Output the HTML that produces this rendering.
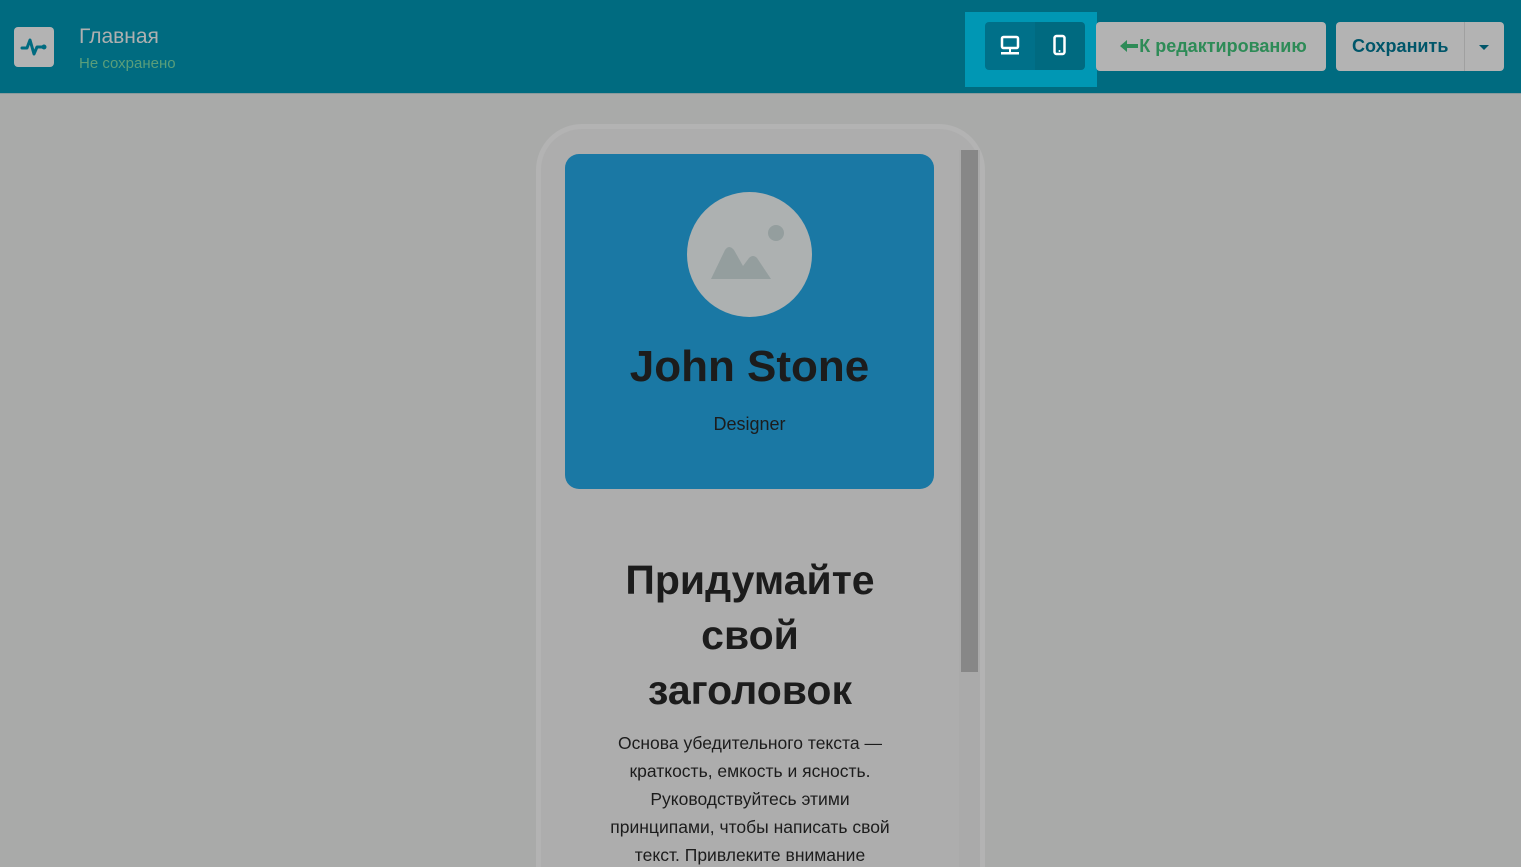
<!DOCTYPE html>
<html><head><meta charset="utf-8"><style>
*{margin:0;padding:0;box-sizing:border-box}
html,body{width:1521px;height:867px;overflow:hidden}
body{background:#a9aaa9;font-family:"Liberation Sans","DejaVu Sans",sans-serif;position:relative}
.hdr{position:absolute;left:0;top:0;width:1521px;height:94px;background:#006b80;border-bottom:1px solid #8a9a9c}
.logo{position:absolute;left:14px;top:27px;width:40px;height:40px;background:#b3b3b3;border-radius:4px}
.t1{position:absolute;left:79px;top:25px;font-size:21px;color:#b0b0b0}
.t2{position:absolute;left:79px;top:55px;font-size:15px;color:#5a9e7a}
.tog{position:absolute;left:965px;top:12px;width:132px;height:75px;background:#0097b4}
.tb{position:absolute;top:10px;height:48px;width:50px;background:#007089}
.btn{position:absolute;top:22px;height:49px;background:#b3b3b3;border-radius:4px;font-weight:bold;font-size:18px;line-height:49px}
.frame{position:absolute;left:536px;top:124px;width:449px;height:743px;border:5px solid #b3b3b3;border-bottom:0;border-radius:46px 46px 0 0;background:#adadad}
.card{position:absolute;left:565px;top:154px;width:369px;height:335px;background:#1a78a4;border-radius:14px}
.av{position:absolute;left:122px;top:38px;width:125px;height:125px;border-radius:50%;background:#adb1b1}
.name{position:absolute;left:0;width:369px;top:188px;text-align:center;font-size:44px;font-weight:bold;color:#1c1c1c}
.role{position:absolute;left:0;width:369px;top:260px;text-align:center;font-size:18px;color:#1c1c1c}
.h{position:absolute;left:575px;width:350px;top:553px;text-align:center;font-size:41px;font-weight:bold;line-height:55px;color:#1c1c1c}
.p{position:absolute;left:606px;width:288px;top:729px;height:138px;overflow:hidden;text-align:center;font-size:17.5px;line-height:28px;color:#1c1c1c}
.track{position:absolute;left:959px;top:150px;width:21px;height:717px;background:#aaaaaa}
.thumb{position:absolute;left:961px;top:150px;width:17px;height:522px;background:#878787}
</style></head><body>
<div class="hdr">
<div class="logo"><svg width="40" height="40" viewBox="0 0 40 40"><path d="M8 21h5l3-8 4 14 3-7h6" fill="none" stroke="#006b80" stroke-width="3" stroke-linecap="round" stroke-linejoin="round"/><circle cx="30" cy="20" r="2.5" fill="#006b80"/></svg></div>
<div class="t1">Главная</div>
<div class="t2">Не сохранено</div>
<div class="tog">
<div class="tb" style="left:20px;border-radius:4px 0 0 4px"><svg width="50" height="48"><rect x="17" y="15" width="16" height="11" rx="1.5" fill="none" stroke="#fff" stroke-width="2.5"/><rect x="16" y="30" width="18" height="2.5" fill="#fff"/><rect x="24" y="26" width="2" height="4" fill="#fff"/></svg></div>
<div class="tb" style="left:70px;background:#006a80;border-radius:0 4px 4px 0"><svg width="50" height="48"><rect x="19.5" y="14" width="10" height="18" rx="2" fill="none" stroke="#fff" stroke-width="2.5"/><circle cx="24.5" cy="29" r="1" fill="#fff"/></svg></div>
</div>
<div class="btn" style="left:1096px;width:230px;color:#2e8b57;text-align:center;padding-left:4px"><svg width="20" height="14" viewBox="0 0 20 14" style="vertical-align:-1px"><path d="M1 7L8 1v4h11v4H8v4z" fill="#2e8b57"/></svg>К редактированию</div>
<div class="btn" style="left:1336px;width:168px;color:#00566a"><span style="margin-left:16px">Сохранить</span><div style="position:absolute;left:128px;top:0;width:1px;height:49px;background:#a0a0a0"></div><div style="position:absolute;left:143px;top:23px;border:5px solid transparent;border-top:5px solid #00566a"></div></div>
</div>
<div class="frame"></div>
<div class="track"></div><div class="thumb"></div>
<div class="card">
<div class="av"><svg width="125" height="125"><circle cx="89" cy="41" r="8" fill="#949e9e"/><path d="M24 87 L38 58 Q42 52 47 58 L56 74 L62 66 Q66 62 70 66 L84 87 Z" fill="#949e9e"/></svg></div>
<div class="name">John Stone</div>
<div class="role">Designer</div>
</div>
<div class="h">Придумайте<br>свой<br>заголовок</div>
<div class="p">Основа убедительного текста — краткость, емкость и ясность. Руководствуйтесь этими принципами, чтобы написать свой текст. Привлеките внимание</div>
</body></html>
